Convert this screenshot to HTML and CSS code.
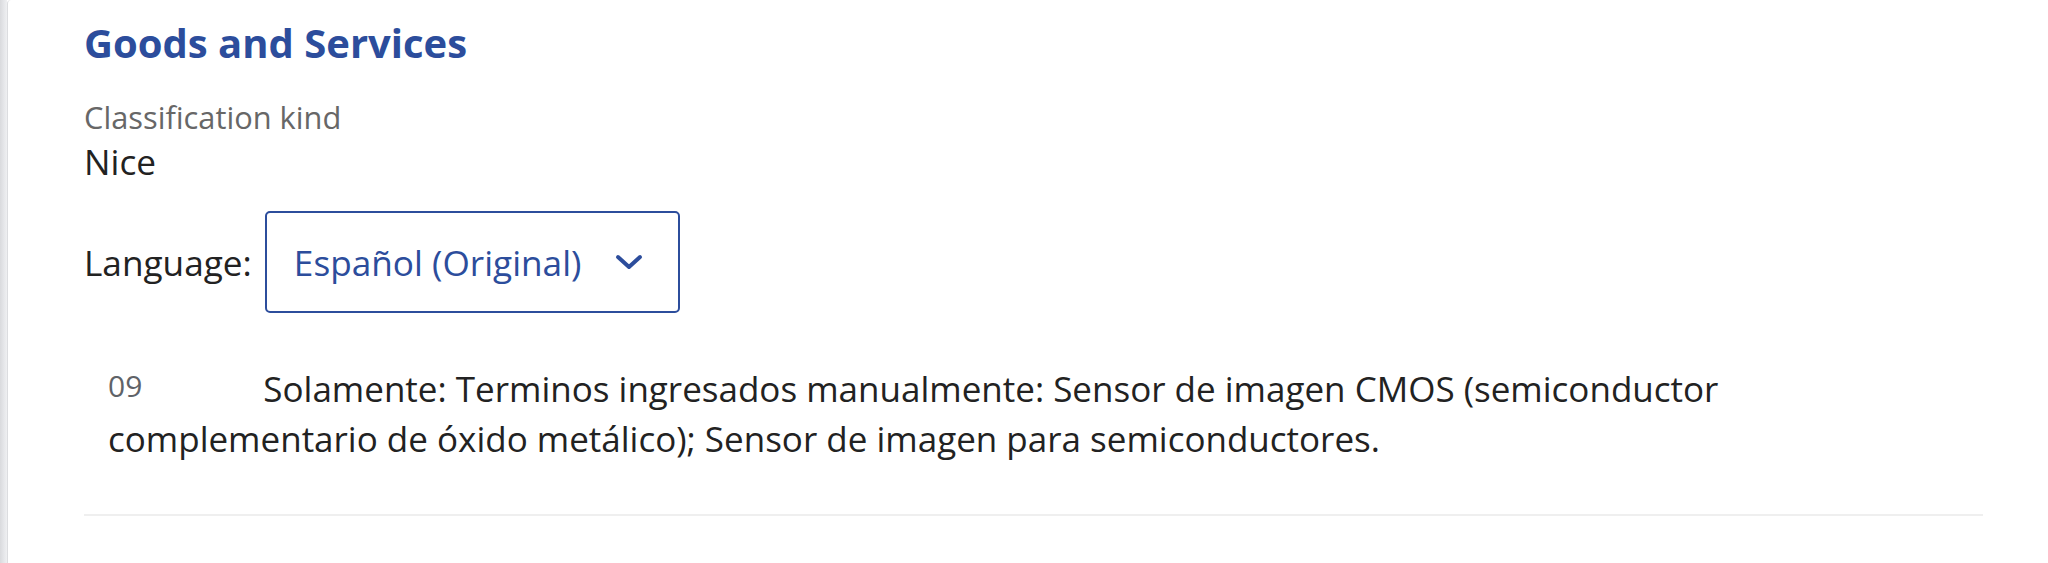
FILE: index.html
```html
<!DOCTYPE html>
<html lang="en">
<head>
<meta charset="utf-8">
<title>Goods and Services</title>
<link rel="stylesheet" href="styles.css">
</head>
<body>
<div class="page">
  <section class="card">
    <h2 class="title">Goods and Services</h2>
    <div class="field">
      <div class="field-label">Classification kind</div>
      <div class="field-value">Nice</div>
    </div>
    <div class="lang-row">
      <span class="lang-label">Language:</span>
      <div class="select">
        <span class="select-text">Español (Original)</span>
        <svg class="chevron" width="28" height="16" viewBox="0 0 28 16" aria-hidden="true"><path d="M3 3 L14 13 L25 3" fill="none" stroke="#2c4d9c" stroke-width="4" stroke-linecap="round" stroke-linejoin="round"/></svg>
      </div>
    </div>
    <div class="gs-item">
      <p class="gs-text"><span class="gs-class">09</span>Solamente: Terminos ingresados manualmente: Sensor de imagen CMOS (semiconductor complementario de óxido metálico); Sensor de imagen para semiconductores.</p>
    </div>
  </section>
</div>
</body>
</html>
```

FILE: styles.css
```css
html, body {
  margin: 0;
  padding: 0;
  background: #ffffff;
}
body {
  font-family: "Open Sans", "Noto Sans", sans-serif;
  color: #222222;
}
.page {
  display: flex;
  min-height: 563px;
  padding-left: 7px;
  background: linear-gradient(to right, #d9dadd 0px, #e6e7ea 4px, #eff0f2 7px, #ffffff 7px);
}
.card {
  flex: 1;
  background: #ffffff;
  border-left: 1px solid #dcdde0;
  border-top-left-radius: 4px;
  padding: 20px 65px 0 76px;
}
.title {
  margin: 0;
  font-size: 40px;
  line-height: 46px;
  font-weight: 700;
  color: #2c4d9c;
}
.field {
  margin-top: 31px;
}
.field-label {
  font-size: 30.8px;
  line-height: 40px;
  color: #676767;
}
.field-value {
  font-size: 35.2px;
  line-height: 48px;
  color: #222222;
}
.lang-row {
  display: flex;
  align-items: center;
  gap: 13px;
  margin-top: 26px;
}
.lang-label {
  font-size: 35.2px;
  line-height: 48px;
  color: #222222;
}
.select {
  box-sizing: border-box;
  width: 415px;
  height: 102px;
  border: 2px solid #2c4d9c;
  border-radius: 5px;
  display: flex;
  align-items: center;
  justify-content: space-between;
  padding: 0 35px 0 27px;
}
.select-text {
  font-size: 35.2px;
  line-height: 48px;
  color: #2c4d9c;
}
.chevron {
  display: block;
}
.gs-item {
  margin-top: 26px;
  padding: 25px 110px 50px 24px;
  border-bottom: 2px solid #efefef;
}
.gs-text {
  margin: 0;
  font-size: 35px;
  line-height: 50px;
  color: #222222;
}
.gs-class {
  font-size: 30px;
  line-height: 1;
  color: #5f6368;
  vertical-align: 5px;
  margin-right: 121px;
}
```
